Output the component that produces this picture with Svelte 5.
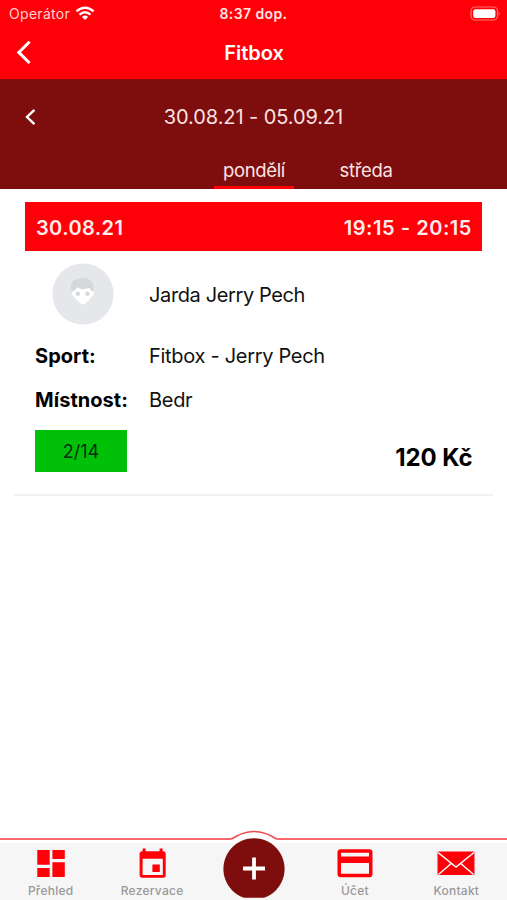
<script>
  const week = '30.08.21 - 05.09.21';
  const tabs = [
    { label: 'pondělí', active: true },
    { label: 'středa', active: false }
  ];
  const details = [
    { label: 'Sport:', value: 'Fitbox - Jerry Pech' },
    { label: 'Místnost:', value: 'Bedr' }
  ];
</script>

<div class="app">
  <header>
    <div class="status">
      <div class="carrier">
        <span>Operátor</span>
        <svg width="20" height="15" viewBox="0 0 20 15" fill="none" stroke="#fff" stroke-width="2.4">
          <path d="M1.4 5.4Q10 -2 18.6 5.4" />
          <path d="M4.5 8.6Q10 4 15.5 8.6" />
          <path d="M10 14L6.9 10.9Q10 8.3 13.1 10.9Z" fill="#fff" stroke="none" />
        </svg>
      </div>
      <span class="clock">8:37 dop.</span>
      <svg class="battery" width="31" height="15" viewBox="0 0 31 15">
        <rect x="1" y="1" width="26.5" height="13" rx="4" fill="none" stroke="#ff7070" stroke-width="1.2" />
        <rect x="3.2" y="3.2" width="22.2" height="8.8" rx="2.2" fill="#fff" />
        <path d="M28.7 5.2Q30.6 7.5 28.7 9.8Z" fill="#ff8585" />
      </svg>
    </div>
    <div class="title">
      <svg width="16" height="26" viewBox="0 0 16 26" fill="none" stroke="#fff" stroke-width="3">
        <path d="M13.6 1.8L2.8 12.4L13.6 23" />
      </svg>
      <h1>Fitbox</h1>
      <span></span>
    </div>
  </header>

  <section class="picker">
    <div class="week">
      <svg width="12" height="18" viewBox="0 0 12 18" fill="none" stroke="#fff" stroke-width="2.4">
        <path d="M10.4 1.8L3 9L10.4 16.2" />
      </svg>
      <span class="range">{week}</span>
      <span></span>
    </div>
    <div class="tabs">
      {#each tabs as tab}
        <div class="tab"><span class:active={tab.active}>{tab.label}</span></div>
      {/each}
    </div>
  </section>

  <main>
    <article>
      <div class="slot"><span>30.08.21</span><span class="time">19:15 - 20:15</span></div>
      <div class="trainer">
        <svg class="avatar" width="62" height="62" viewBox="0 0 62 62">
          <circle cx="31" cy="31" r="30.6" fill="#e5e7ea" />
          <path d="M19.5 27.5C17 20 22 15.8 27.5 15.6C34 13.5 43.5 17 41.5 27.5L38 31H23Z" fill="#d5d8db" />
          <path d="M22 28L25.500 24.200Q29 27 34 25.800L37 25L39.500 28Q42.500 28 41.700 31Q41.200 33.300 39.300 33.800Q38.600 36.500 35 39L33 40.700Q31 42 29 40.700L27 39Q23.400 36.500 22.700 33.800Q20.300 33.300 20 31Q19.600 28 22 28Z" fill="#fff" />
          <circle cx="25.800" cy="30.700" r="2.200" fill="#d5d8db" />
          <circle cx="35.500" cy="30.700" r="2.200" fill="#d5d8db" />
        </svg>
        <span class="name">Jarda Jerry Pech</span>
      </div>
      {#each details as row}
        <div class="detail"><b>{row.label}</b><span>{row.value}</span></div>
      {/each}
      <div class="bottom">
        <span class="capacity">2/14</span>
        <strong>120 Kč</strong>
      </div>
    </article>
  </main>

  <nav>
    <div class="item">
      <svg width="38" height="32" viewBox="0 0 38 32" fill="#ff0008">
        <path d="M5.3 3h12.4v14.8H5.3zM20.4 3h12.4v9H20.4zM5.3 21h12.4v9H5.3zM20.4 15.2h12.4V30H20.4z" />
      </svg>
      <span>Přehled</span>
    </div>
    <div class="item">
      <svg width="38" height="32" viewBox="-0.6 0 38 32">
        <path fill="#ff0008" fill-rule="evenodd" d="M9 1.6h3v2.6h14V1.6h3v2.6h0.5q2.6 0 2.6 2.6V28q0 2.8-2.6 2.8H8.7Q6 30.8 6 28V6.8q0-2.6 2.7-2.6H9zM9 11.700V27.900h20.200V11.700zM18.800 17.500h7.400v7.400h-7.400z" />
      </svg>
      <span>Rezervace</span>
    </div>
    <div class="item add">
      <svg width="64" height="70" viewBox="0 0 64 70">
        <path d="M9.500 10.500V9Q32 -6 54.500 9V10.500Z" fill="#fff" />
        <path d="M9.500 9Q32 -6 54.500 9" fill="none" stroke="#f4474b" stroke-width="1.600" />
        <path d="M22 67.800A30.600 30.600 0 1 1 42 67.800Z" fill="#7e0d0d" />
        <path d="M21 38.500H43M32 27.500V49.500" fill="none" stroke="#fff" stroke-width="3.800" />
      </svg>
    </div>
    <div class="item">
      <svg width="38" height="32" viewBox="0 0 38 32">
        <path fill="#ff0008" fill-rule="evenodd" d="M4.800 2.300H33.200Q36.500 2.300 36.500 5.600V27Q36.500 30.200 33.200 30.200H4.800Q1.500 30.200 1.500 27V5.600Q1.500 2.300 4.800 2.300ZM5 5.800V9.500H33V5.800ZM5 16V26.700H33V16Z" />
      </svg>
      <span>Účet</span>
    </div>
    <div class="item">
      <svg width="38" height="32" viewBox="0 0 38 32">
        <rect x="0.500" y="4.500" width="37" height="23.500" rx="1" fill="#ff0008" />
        <path d="M1 5.500L19 20L37 5.500M1.500 27.500L14.500 16.300M36.500 27.500L23.500 16.300" fill="none" stroke="#fff" stroke-width="1.500" />
      </svg>
      <span>Kontakt</span>
    </div>
  </nav>
</div>

<style>
  :global(body) { margin: 0; background: #fff; }
  .app {
    width: 507px; height: 900px; display: flex; flex-direction: column;
    overflow: hidden; background: #fff; color: #111;
    font-family: Inter, 'Liberation Sans', sans-serif;
  }
  header { height: 79px; background: #ff0008; color: #fff; }
  .status {
    height: 27px; display: grid; grid-template-columns: 1fr auto 1fr;
    align-items: center; font-size: 14px;
  }
  .carrier { display: flex; align-items: center; gap: 5px; padding-left: 9px; color: #ffd0d0; }
  .carrier span { letter-spacing: 0.3px; }
  .clock { font-weight: 600; letter-spacing: 0.4px; color: #ffe4e4; }
  .battery { justify-self: end; margin-right: 6px; }
  .title {
    height: 52px; display: grid; grid-template-columns: 1fr auto 1fr; align-items: center;
  }
  .title svg { margin-left: 16px; }
  h1 { margin: 0; padding-left: 1px; font-size: 20px; line-height: 24px; font-weight: 600; }
  .picker {
    height: 110px; box-sizing: border-box; background: #7e0d0d; color: #fbe3e3;
    display: flex; flex-direction: column; border-top: 1px solid #8f080b;
  }
  .week {
    height: 73px; display: grid; grid-template-columns: 1fr auto 1fr; align-items: center;
  }
  .week svg { margin-left: 24px; }
  .range { font-size: 20px; letter-spacing: -0.08px; }
  .tabs { flex: 1; display: flex; padding-left: 198px; }
  .tab { width: 112px; display: flex; justify-content: center; }
  .tab span {
    width: 80px; box-sizing: border-box; padding-top: 2px; text-align: center; font-size: 18.5px;
    letter-spacing: -0.35px; line-height: 31px; border-bottom: 3px solid transparent;
  }
  .tab .active { border-color: #ff0008; }
  main { flex: 1; padding: 13px 14px 0; }
  article { height: 294px; box-sizing: border-box; border-bottom: 2px solid #f0f1f2; padding: 0 11px; }
  .slot {
    height: 49px; box-sizing: border-box; padding: 2px 10px 0 11px; display: flex;
    justify-content: space-between; align-items: center; background: #ff0008; color: #ffeded;
    font-size: 20px; font-weight: 600; letter-spacing: 0.4px;
  }
  .time { letter-spacing: 0.55px; }
  .trainer { height: 86px; display: flex; align-items: center; font-size: 20px; }
  .avatar { margin: 0 35px 0 27px; }
  .name { letter-spacing: -0.38px; padding-top: 1px; }
  .detail { display: flex; align-items: center; height: 43.5px; padding-left: 10px; font-size: 20px; }
  .detail:nth-of-type(3) { margin-top: -2.5px; }
  .detail b { width: 114px; font-weight: 700; letter-spacing: 0.05px; color: #000; white-space: nowrap; }
  .detail span { letter-spacing: -0.3px; }
  .bottom { display: flex; justify-content: space-between; padding: 8.5px 9.5px 0 10px; }
  .capacity {
    width: 92px; height: 42px; line-height: 43px; text-align: center;
    background: #00c008; color: #062b06; font-size: 18px;
  }
  strong { font-size: 24px; line-height: 55px; font-weight: 700; letter-spacing: -0.1px; color: #000; }
  nav {
    height: 62px; box-sizing: border-box; display: flex; border-top: 2px solid #f9686b;
    background: linear-gradient(#fff 3px, #f6f6f6 3px);
  }
  .item {
    flex: 1; display: flex; flex-direction: column; align-items: center; padding-top: 7px;
    color: #999; font-size: 12px; font-weight: 500; letter-spacing: 0.25px;
  }
  .item svg { flex: none; }
  .item span { line-height: 16px; margin-top: 4px; }
  .item.add { padding: 0; margin-top: -10px; }
</style>
